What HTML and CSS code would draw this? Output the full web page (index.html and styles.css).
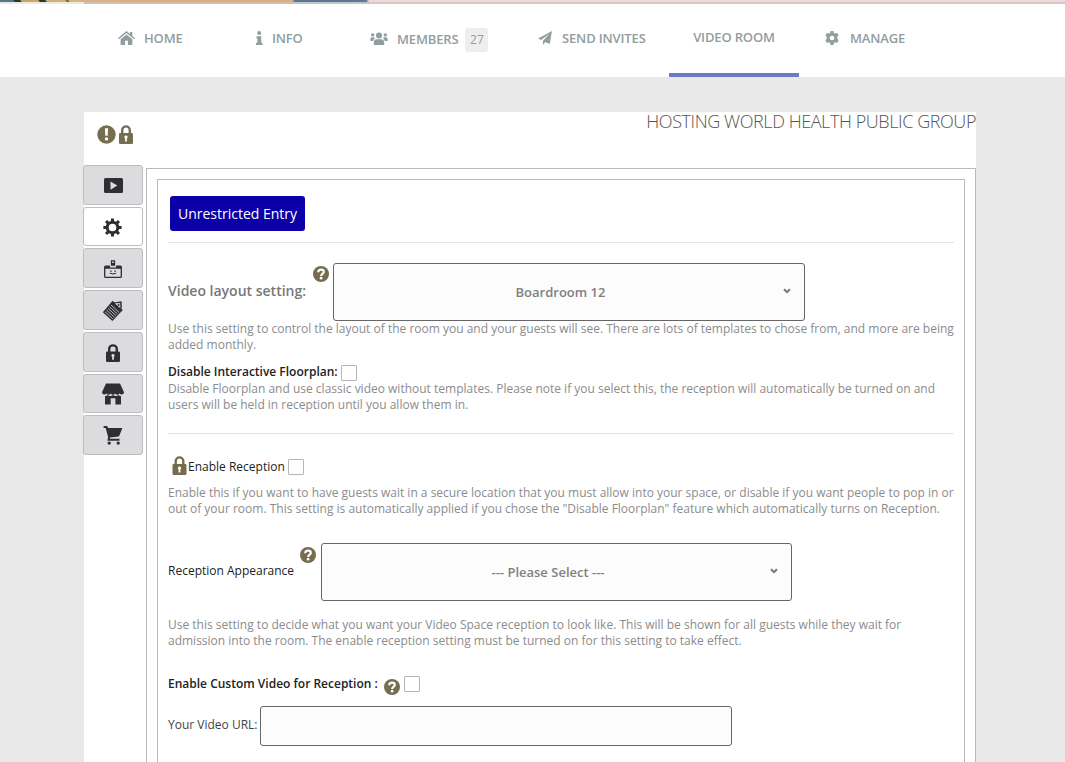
FILE: index.html
```html
<!DOCTYPE html>
<html lang="en">
<head>
<meta charset="utf-8">
<title>Video Room</title>
<link rel="stylesheet" href="styles.css">
</head>
<body>
<svg class="defs" width="0" height="0" aria-hidden="true">
  <symbol id="lock" viewBox="0 0 14 19"><path fill-rule="evenodd" d="M1.3 8H2V5.2a5 5 0 0 1 10 0V8h.7A1.3 1.3 0 0 1 14 9.300v8.400a1.300 1.300 0 0 1-1.300 1.300H1.300A1.300 1.300 0 0 1 0 17.700V9.300A1.300 1.300 0 0 1 1.300 8zM4.400 8h5.200V5.200a2.600 2.600 0 0 0-5.200 0zM7 10.500a1.700 1.700 0 0 0-.9 3.100V16.500h1.800v-2.900A1.700 1.700 0 0 0 7 10.500z"/></symbol>
  <symbol id="help" viewBox="0 0 16 16"><circle cx="8" cy="8" r="8"/><path d="M5.200 6.200C5.300 4.400 6.500 3.700 8.100 3.700S10.800 4.500 10.800 5.900C10.800 7.700 8.200 7.600 8.200 9.900" fill="none" stroke="#fff" stroke-width="2.200"/><circle cx="8.100" cy="12.200" r="1.350" fill="#fff"/></symbol>
  <symbol id="gear" viewBox="0 0 20 20"><circle cx="10" cy="10" r="5.600" fill="none" stroke="#2d2f31" stroke-width="3.200"/><path fill="none" stroke="#2d2f31" stroke-width="3.200" d="M10 .4v3.400M10 16.200v3.400M.4 10h3.400M16.200 10h3.400M3.200 3.200l2.400 2.400M14.400 14.400l2.400 2.400M3.200 16.800l2.400-2.400M14.400 5.600l2.400-2.400"/></symbol>
</svg>

<div class="cover"><i class="leaf leaf-a"></i><i class="leaf leaf-b"></i><i class="leaf leaf-c"></i></div>
<div class="cover-edge"></div>
<nav class="nav">
  <a class="nav-item home"><svg width="17" height="14" viewBox="0 0 17 14"><path d="M0 7.200 7.800.4q.7-.5 1.400 0L12 2.900V1h2.300v3.900L17 7.200l-.9 1L8.500 1.900.9 8.200z"/><path d="M2.600 8.300 8.500 3.400l5.900 4.900V13.200q0 .8-.8.8H10V9.700H7V14H3.400q-.8 0-.8-.8z"/></svg><span>HOME</span></a>
  <a class="nav-item info"><svg width="7" height="14" viewBox="0 0 7 14"><circle cx="3.200" cy="2" r="2"/><path d="M.5 5.200h4.700v6.500H6.500V14H0v-2.300h1.400V7.400H.5z"/></svg><span>INFO</span></a>
  <a class="nav-item members"><svg width="18" height="13" viewBox="0 0 18 13"><circle cx="9" cy="3.400" r="3"/><circle cx="2.700" cy="2.900" r="1.700"/><circle cx="15.300" cy="2.900" r="1.700"/><path d="M3.800 12.500v-2q0-3 3-3.300h4.400q3 .3 3 3.300v2q-.2.500-.8.500H4.600q-.7 0-.8-.5zM.3 8.600V7q.1-1.800 1.700-1.800H4L5 6.600Q3.500 7.300 3.200 9H.7zM17.700 8.600V7Q17.600 5.200 16 5.200h-2l-1 1.400q1.500.7 1.800 2.400h2.500z"/></svg><span>MEMBERS</span><b class="count">27</b></a>
  <a class="nav-item invites"><svg width="14" height="14" viewBox="0 0 14 14"><path d="M14 0 0 7.600 3.200 9 11.300 2.800 4.900 9.900V14L7.300 11.100 11.700 13z"/></svg><span>SEND INVITES</span></a>
  <a class="nav-item active"><span>VIDEO ROOM</span></a>
  <a class="nav-item manage"><svg width="14" height="14" viewBox="0 0 14 14"><path fill-rule="evenodd" d="M5.500 0h3l.4 1.900 1.300.7 1.900-.6 1.500 2.500-1.400 1.300v1.800L13.600 9.300 12.100 12l-1.900-.7-1.300.7-.4 2h-3l-.4-2-1.300-.7-1.900.7L.4 9.300l1.400-1.500V6L.4 4.500 1.900 2l1.900.6 1.300-.7zM7 4.700a2.300 2.300 0 1 0 0 4.600 2.300 2.300 0 0 0 0-4.600z"/></svg><span>MANAGE</span></a>
</nav>

<main class="page">
  <header class="head">
    <div class="status">
      <svg width="19" height="19" viewBox="0 0 19 19"><circle cx="9.500" cy="9.500" r="9.200"/><path fill="#fff" d="M7.900 3.300h3.200l-.4 7.400H8.300z"/><circle cx="9.500" cy="13.900" r="1.700" fill="#fff"/></svg>
      <svg width="14" height="19"><use href="#lock"/></svg>
    </div>
    <h1 class="title">HOSTING WORLD HEALTH PUBLIC GROUP</h1>
  </header>
  <div class="body">
    <div class="tabs">
      <button class="tab"><svg width="19" height="15" viewBox="0 0 19 15"><path fill-rule="evenodd" d="M1.500 0h16Q19 0 19 1.500v12q0 1.500-1.500 1.500h-16Q0 15 0 13.500v-12Q0 0 1.500 0zM6.500 3.500v8.200l6.800-4.100z"/></svg></button>
      <button class="tab selected"><svg width="19" height="19"><use href="#gear"/></svg></button>
      <button class="tab"><svg class="badge" width="18" height="18" viewBox="0 0 18 18"><path fill="none" stroke="#2d2f31" stroke-width="1.300" d="M7.500 5V.9h3V5zM5.800 6.200H1.600q-.9 0-.9.900v9.300q0 .9.900.9h14.800q.9 0 .9-.9V7.100q0-.9-.9-.9h-4.200"/><path d="M1 6h5v1.500h6V6h5v2.800H1zM6.200 10.500h1.400v1.300H6.200zM10.400 10.500h1.400v1.300h-1.400zM7.600 3h2.800v2H7.600z"/><path fill="none" stroke="#2d2f31" d="M5.800 13.200q3.200 1.600 6.400 0"/></svg></button>
      <button class="tab"><svg width="22" height="22" viewBox="0 0 22 22"><path fill-rule="evenodd" d="M10.600.8 20.800 10 10.400 21 .8 12.200z"/><path d="m9 5 8.200 7.500M7.500 6.700l8.100 7.400M6 8.400l8.100 7.300M4.500 10.100l8 7.200M3 11.800l7.800 7" stroke="#dcdcde" stroke-width=".8" /><path d="m12 3.200 6.900-1 .2 6.400" fill="none" stroke="#2d2f31" stroke-width="1.500"/><path d="m12.800 3.300 5 .2v4.300z" fill="#dcdcde"/><circle cx="16.600" cy="5.100" r="1"/></svg></button>
      <button class="tab"><svg width="14" height="18" viewBox="0 0 14 19" preserveAspectRatio="none"><use href="#lock" width="14" height="19"/></svg></button>
      <button class="tab"><svg width="22" height="22" viewBox="0 0 22 22"><path d="M4 .5h14l4 8.800q-.1 2.200-2.300 2.200-1.400 0-2.200-1-.8 1.200-2.200 1.200T13.100 10.500Q12.400 11.700 11 11.700T8.800 10.500Q8 11.700 6.600 11.700T4.400 10.500q-.7 1-2.100 1Q.1 11.500 0 9.300z"/><path d="M3 12.900q1.600.1 2.500-.9 1.100 1 2.800.9 1.500 0 2.700-.9 1.200.9 2.700.9 1.700.1 2.800-.9.900 1 2.500.9V21q0 .6-.6.6H14q-.6 0-.6-.6v-5.700H8.700V21q0 .6-.6.6H3.600q-.6 0-.6-.6z"/></svg></button>
      <button class="tab"><svg width="20" height="19" viewBox="0 0 20 19"><path d="M.6 0H3.800q.6 0 .8.600L5 2H19.400L16.300 9.800q-.2.500-.8.600L7 11.500l-.2 1.200H16.500v2H4.500L5.100 11 2.700 1.900H.6z"/><circle cx="6.200" cy="17.100" r="1.700"/><circle cx="15.200" cy="17.100" r="1.700"/></svg></button>
    </div>
    <section class="outer">
      <div class="inner">
        <button class="entry"><span>Unrestricted Entry</span></button>
        <div class="rule rule-a"></div>
        <div class="row layout-row">
          <label class="big">Video layout setting:</label>
          <svg class="help" width="16" height="16"><use href="#help"/></svg>
          <div class="select"><span>Boardroom 12</span><svg width="8" height="6" viewBox="0 0 8 6"><path d="M1 1.200 4 4.200 7 1.200"/></svg></div>
        </div>
        <p class="note"><span>Use this setting to control the layout of the room you and your guests will see. There are lots of templates to chose from, and more are being</span><span>added monthly.</span></p>
        <div class="row floor-row"><label class="strong">Disable Interactive Floorplan:</label><i class="check"></i></div>
        <p class="note"><span>Disable Floorplan and use classic video without templates. Please note if you select this, the reception will automatically be turned on and</span><span>users will be held in reception until you allow them in.</span></p>
        <div class="rule rule-b"></div>
        <div class="row reception-row"><svg class="olive" width="15" height="19"><use href="#lock"/></svg><label>Enable Reception</label><i class="check"></i></div>
        <p class="note"><span>Enable this if you want to have guests wait in a secure location that you must allow into your space, or disable if you want people to pop in or</span><span>out of your room. This setting is automatically applied if you chose the "Disable Floorplan" feature which automatically turns on Reception.</span></p>
        <div class="row appearance-row">
          <label>Reception Appearance</label>
          <svg class="help" width="16" height="16"><use href="#help"/></svg>
          <div class="select"><span>--- Please Select ---</span><svg width="8" height="6" viewBox="0 0 8 6"><path d="M1 1.200 4 4.200 7 1.200"/></svg></div>
        </div>
        <p class="note"><span>Use this setting to decide what you want your Video Space reception to look like. This will be shown for all guests while they wait for</span><span>admission into the room. The enable reception setting must be turned on for this setting to take effect.</span></p>
        <div class="row custom-row"><label class="strong">Enable Custom Video for Reception :</label><svg class="help" width="16" height="16"><use href="#help"/></svg><i class="check"></i></div>
        <div class="row url-row"><label>Your Video URL:</label><input class="url" type="text"></div>
      </div>
    </section>
  </div>
</main>
</body>
</html>
```
FILE: styles.css
```css
* { box-sizing: border-box; }
body { margin: 0; height: 762px; overflow: hidden; background: #e9e9e9; font: 12px/16px "Open Sans", sans-serif; color: #222; }
svg { display: block; flex: none; }
.defs { position: absolute; }

.cover { position: relative; height: 2px; background: linear-gradient(90deg, #53778d 0, #53778d 14px, #c5a367 18px, #d9b87b 75px, #e5ad79 90px, #e5ad79 292px, #5d7791 295px, #617792 366px, #f0d9d7 369px); }
.leaf { position: absolute; top: 0; width: 7px; height: 2px; background: #263b29; transform: skewX(40deg); }
.leaf-a { left: 14px; }
.leaf-b { left: 39px; }
.leaf-c { left: 66px; width: 3px; background: #6b7628; }
.cover-edge { height: 2px; margin-left: 84px; background: linear-gradient(90deg, #bec5cb 0, #cbbfb5 40px, #cbbfb5 205px, #bec5cb 212px, #bec5cb 282px, #d2c9c8 286px); }

.nav { height: 73px; background: #fff; display: flex; font-weight: 600; font-size: 13px; letter-spacing: -.15px; color: #929da0; }
.nav-item { display: flex; align-items: center; height: 73px; padding-bottom: 6px; white-space: nowrap; flex: none; }
.nav-item svg { fill: #929da0; }
.home { margin-left: 118px; width: 138px; gap: 9px; }
.info { width: 114px; gap: 9px; }
.members { width: 168px; gap: 9px; padding-bottom: 2px; }
.members svg { margin-top: -3px; }
.members span { margin-top: -1px; }
.count { margin-left: -2px; width: 23px; height: 24px; line-height: 24px; text-align: center; background: #eee; border-radius: 3px; font-size: 12px; font-weight: 400; letter-spacing: 0; }
.invites { width: 131px; gap: 10px; }
.active { width: 130px; justify-content: center; border-bottom: 4px solid #6b7cc2; padding-bottom: 4px; }
.manage { margin-left: 26px; gap: 11px; }

.page { margin: 35px 0 0 84px; width: 892px; height: 650px; background: #fff; }
.head { height: 53px; display: flex; justify-content: space-between; }
.status { display: flex; gap: 3px; padding: 13px 0 0 13px; fill: #766c50; }
.title { margin: -1px 0 0; font-size: 18px; line-height: 20px; font-weight: 300; color: #555; white-space: nowrap; letter-spacing: -.42px; }

.body { display: flex; height: 597px; }
.tabs { width: 60px; margin-left: -1px; flex: none; display: grid; grid-template-rows: 40px 39px 40px 40px 40px 39px 40px; align-content: start; row-gap: 2px; }
.tab { display: flex; align-items: center; justify-content: center; width: 60px; padding: 1px 0 0; border: 1px solid #bdbdc0; border-radius: 3px; background: #dcdcde; fill: #2d2f31; }
.tab.selected { background: #fff; padding: 1px 2px 0 0; }
.outer { width: 830px; margin: 3px 0 0 3px; padding: 10px 10px 0; border: 1px solid #b9b9bb; border-bottom: 0; flex: none; }
.inner { width: 808px; height: 583px; border: 1px solid #b9b9bb; border-bottom: 0; padding: 16px 10px 0; overflow: hidden; }

.entry { display: flex; align-items: center; justify-content: center; margin-left: 2px; width: 135px; height: 35px; padding: 0; border: 0; border-radius: 3px; background: #0b00a8; color: #fff; font: 14px/20px "Open Sans", sans-serif; white-space: nowrap; }
.rule { height: 1px; background: #e4e4e4; }
.rule-a { margin-top: 11px; }
.rule-b { margin-top: 20px; }

.row { display: flex; white-space: nowrap; }
.row label { flex: none; }
.help, .olive { fill: #766c50; }
.big { font-size: 14px; line-height: 20px; font-weight: 600; color: #777; width: 145px; margin-top: 18px; }
.layout-row { margin-top: 20px; height: 58px; }
.help { margin-top: 3px; }
.select { position: relative; width: 472px; height: 58px; margin-left: 4px; border: 1px solid #666; border-radius: 3px; background: #fcfcfc; display: flex; align-items: center; justify-content: center; font-size: 13px; font-weight: 600; color: #808080; padding-right: 17px; }
.select svg { position: absolute; right: 13px; top: 24px; fill: none; stroke: #777; stroke-width: 2; }

.note { margin: 0; color: #8c8c8c; }
.note span { display: block; white-space: nowrap; width: max-content; }
.strong { font-weight: 600; }
.check { display: block; width: 16px; height: 16px; border: 1px solid #b5b5b5; border-radius: 1px; background: #fff; }
.floor-row { margin-top: 10px; height: 18px; }
.floor-row label { width: 173px; margin-top: 1px; }
.floor-row .check { margin-top: 2px; }
.reception-row { margin-top: 22px; height: 29px; padding-left: 4px; }
.reception-row label { width: 100px; margin-left: 1px; margin-top: 3px; }
.reception-row .check { margin-top: 3px; }
.appearance-row { margin-top: 26px; height: 58px; }
.appearance-row label { width: 132px; margin-top: 20px; }
.appearance-row .help { margin-top: 4px; }
.appearance-row .select { margin-left: 5px; width: 471px; }
.appearance-row + .note { margin-top: 16px; }
.custom-row { margin-top: 27px; height: 30px; }
.custom-row label { width: 216px; }
.custom-row .check { margin-left: 4px; }
.url-row label { width: 92px; margin-top: 11px; color: #444; }
.url { width: 472px; height: 40px; border: 1px solid #666; border-radius: 3px; background: #fcfcfc; padding: 0 8px; font: inherit; }
```
